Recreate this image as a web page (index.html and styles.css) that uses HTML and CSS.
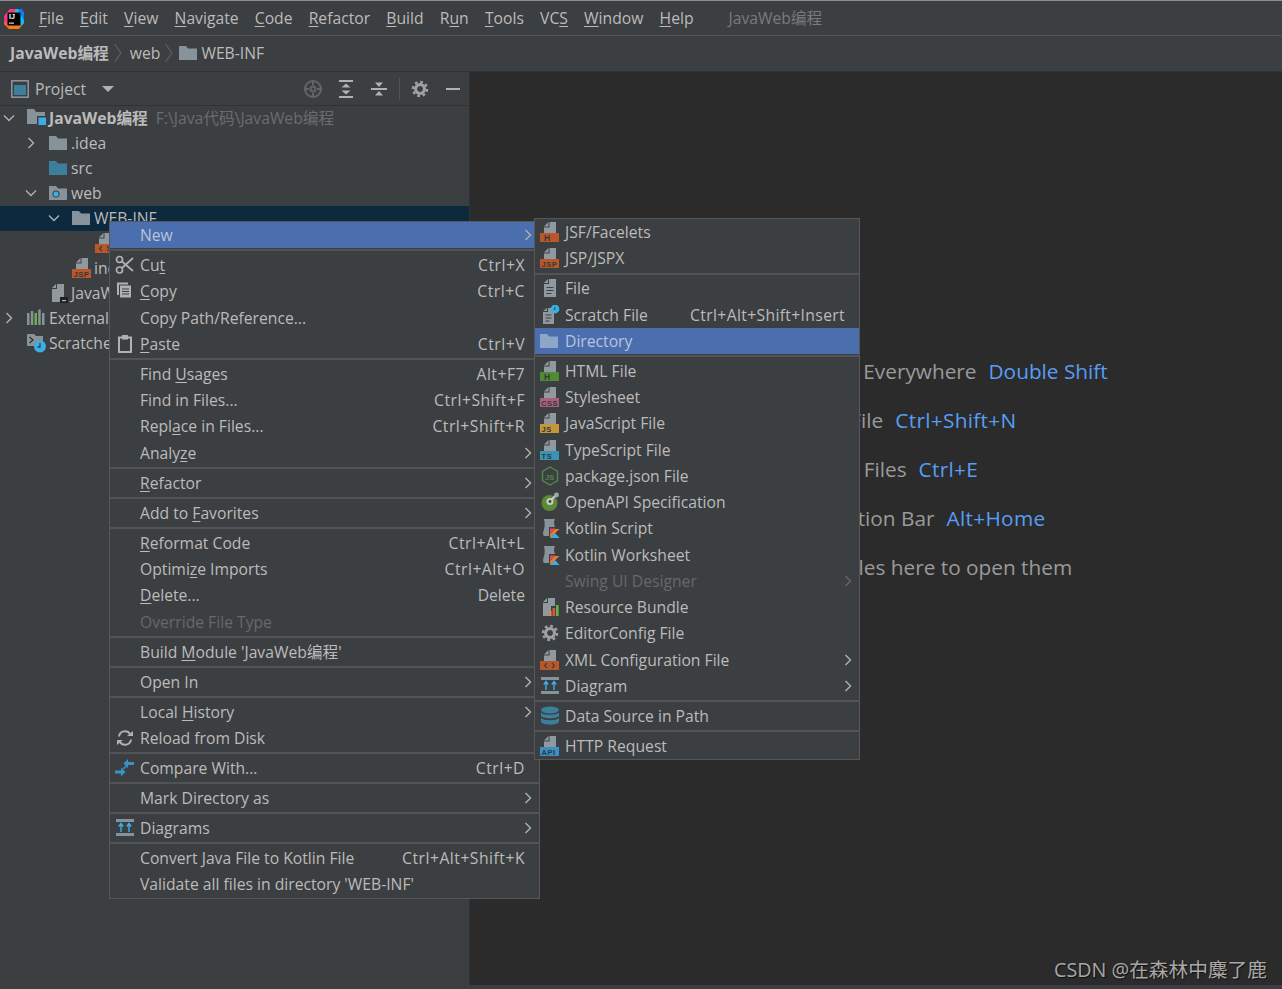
FILE: index.html
```html
<!DOCTYPE html>
<html lang="en">
<head>
<meta charset="utf-8">
<title>JavaWeb编程</title>
<link rel="stylesheet" href="styles.css">
</head>
<body>
<svg class="defs" aria-hidden="true">
  <symbol id="doc" viewBox="0 0 20 20"><path d="M9.5 0H16V11H4V5.5H9.5z" fill="#8f999f"/><path d="M4 4.5L8.5 0V4.5z" fill="#8f999f"/></symbol>
  <symbol id="i-jsf" viewBox="0 0 20 20"><use href="#doc"/><rect y="11" width="19" height="9" fill="#b9562a"/><text x="4" y="19" class="bt">H</text></symbol>
  <symbol id="i-jsp" viewBox="0 0 20 20"><use href="#doc"/><rect y="11" width="19" height="9" fill="#b9562a"/><text x="1.5" y="18.8" class="bs">JSP</text></symbol>
  <symbol id="i-html" viewBox="0 0 20 20"><use href="#doc"/><rect y="11" width="19" height="9" fill="#4f8a36"/><text x="4" y="19" class="bt">H</text></symbol>
  <symbol id="i-css" viewBox="0 0 20 20"><use href="#doc"/><rect y="11" width="19" height="9" fill="#a9607a"/><text x="1" y="18.8" class="bs">CSS</text></symbol>
  <symbol id="i-js" viewBox="0 0 20 20"><use href="#doc"/><rect y="11" width="19" height="9" fill="#c4953a"/><text x="1.5" y="18.8" class="bs">JS</text></symbol>
  <symbol id="i-ts" viewBox="0 0 20 20"><use href="#doc"/><rect y="11" width="19" height="9" fill="#3a92b5"/><text x="1.5" y="18.8" class="bs">TS</text></symbol>
  <symbol id="i-api" viewBox="0 0 20 20"><use href="#doc"/><rect y="11" width="19" height="9" fill="#3a8fc4"/><text x="1.5" y="18.8" class="bs">API</text></symbol>
  <symbol id="i-xml" viewBox="0 0 20 20"><use href="#doc"/><rect y="11" width="19" height="9" fill="#b9562a"/><path d="M7 13l-2.5 2.5L7 18M12 13l2.5 2.5L12 18" fill="none" stroke="#3c3f41" stroke-width="1.2"/></symbol>
  <symbol id="i-file" viewBox="0 0 20 20"><path d="M9 1H16V19H4V6H9z" fill="#8f999f"/><path d="M4 5L8 1V5z" fill="#8f999f"/><path d="M6.5 9.5h7M6.5 12.5h7M6.5 15.5h5" stroke="#3c3f41" stroke-width="1.2"/></symbol>
  <symbol id="i-scratch" viewBox="0 0 20 20"><path d="M8 3H14V19H3V7H8z" fill="#8f999f"/><path d="M3 6L7 3V6z" fill="#8f999f"/><path d="M5.5 10h6M5.5 13h6M5.5 16h4" stroke="#3c3f41" stroke-width="1.2"/><circle cx="15" cy="4" r="4.4" fill="#3baee6"/><path d="M15 1.8V4.4H13.5" fill="none" stroke="#24475c" stroke-width="1"/></symbol>
  <symbol id="i-dir" viewBox="0 0 20 20"><path d="M0 3H7L9 5.5H18V17H0z" fill="#8ea6c8"/></symbol>
  <symbol id="folder" viewBox="0 0 20 20"><path d="M0 3H7L9 5.5H18V17H0z" fill="#87939a"/></symbol>
  <symbol id="folder-src" viewBox="0 0 20 20"><path d="M0 3H7L9 5.5H18V17H0z" fill="#3d7e9c"/></symbol>
  <symbol id="folder-web" viewBox="0 0 20 20"><path d="M0 3H7L9 5.5H18V17H0z" fill="#87939a"/><circle cx="7" cy="11" r="3.6" fill="#3c3f41"/><circle cx="7" cy="11" r="2.6" fill="#3baee6"/></symbol>
  <symbol id="folder-root" viewBox="0 0 20 20"><path d="M0 1H7L9 4H18V16H0z" fill="#87939a"/><rect x="10" y="8" width="9" height="9" fill="#3c3f41"/><rect x="11.5" y="9.5" width="7.5" height="7.5" fill="#3baee6"/></symbol>
  <symbol id="i-iml" viewBox="0 0 20 20"><path d="M8 1H15V14H13V19H3V6H8z" fill="#8f999f"/><path d="M3 5L7 1V5z" fill="#8f999f"/><rect x="11" y="14" width="8" height="6" fill="#1f2021"/><rect x="13" y="17" width="4" height="1.2" fill="#bbb"/></symbol>
  <symbol id="i-lib" viewBox="1 0 20 20"><rect x="1" y="5" width="2.5" height="12" fill="#87939a"/><rect x="4.8" y="3" width="2.5" height="14" fill="#87939a"/><rect x="8.5" y="5" width="2.5" height="12" fill="#62b543"/><rect x="12.2" y="1.5" width="2.5" height="15.5" fill="#87939a"/><rect x="16" y="5" width="2.5" height="12" fill="#87939a"/></symbol>
  <symbol id="i-scr" viewBox="0 0 20 20"><path d="M0 1H7L9 3H16V13H0z" fill="#87939a"/><path d="M2.5 4L6 7L2.5 10" fill="none" stroke="#2b2d2e" stroke-width="1.2"/><circle cx="13" cy="13.5" r="6" fill="#3baee6"/><path d="M13 10V14H10.5" fill="none" stroke="#24475c" stroke-width="1.3"/></symbol>
  <symbol id="i-cut" viewBox="0 0 20 20"><g fill="none" stroke="#afb1b3" stroke-width="1.7"><circle cx="4.5" cy="4.5" r="3"/><circle cx="4.5" cy="15" r="3"/><path d="M7 6.5L18 16M7 13L18 3"/></g></symbol>
  <symbol id="i-copy" viewBox="0 0 20 20"><path d="M2 1.5H13V3.5H4V14H2z" fill="#afb1b3"/><rect x="5" y="4.5" width="11" height="12" fill="#afb1b3"/><path d="M7 8h7M7 10.5h7M7 13h7" stroke="#3c3f41" stroke-width="1.2"/></symbol>
  <symbol id="i-paste" viewBox="0 0 20 20"><path d="M4 3.5H16V18H4z" fill="none" stroke="#afb1b3" stroke-width="2"/><rect x="7" y="1" width="6" height="4.5" fill="#afb1b3"/></symbol>
  <symbol id="i-reload" viewBox="0 0 20 20"><path d="M4 8.5A6 6 0 0 1 15 6M16 11.5A6 6 0 0 1 5 14" fill="none" stroke="#afb1b3" stroke-width="2"/><path d="M12 8H18V3zM8 12H2V17z" fill="#afb1b3"/></symbol>
  <symbol id="i-compare" viewBox="0 0 20 20"><path d="M0 12.5H6V9.5L10.5 14L6 18.5V15.5H0z" fill="#3a92c8"/><path d="M19 4H13V1L8.5 5.5L13 10V7H19z" fill="#3a92c8"/><path d="M8 11L12 7.5" stroke="#3a92c8" stroke-width="1.6"/></symbol>
  <symbol id="i-diagram" viewBox="0 0 20 20"><rect x="1" y="1" width="18" height="3" fill="#87939a"/><rect x="1" y="15" width="18" height="3" fill="#87939a"/><path d="M6 14V6M14 14V6M3.8 8.5L6 5.5L8.2 8.5M11.8 8.5L14 5.5L16.2 8.5" fill="none" stroke="#3baee6" stroke-width="1.4"/></symbol>
  <symbol id="i-pkg" viewBox="0 0 20 20"><path d="M10 1L17.5 5.3V14.7L10 19L2.5 14.7V5.3z" fill="none" stroke="#4f8a4a" stroke-width="1.4"/><text x="5" y="13.5" class="bp">JS</text></symbol>
  <symbol id="i-oapi" viewBox="0 0 20 20"><circle cx="9.5" cy="11" r="8" fill="#5a8a32"/><circle cx="10" cy="9.5" r="3.6" fill="#c7c9ca"/><path d="M10 9.5L16 3" stroke="#c7c9ca" stroke-width="2"/><circle cx="16.5" cy="3" r="2.4" fill="#a3a5a6"/><circle cx="10" cy="9.5" r="1.4" fill="#3c3f41"/></symbol>
  <symbol id="i-kt" viewBox="0 0 20 20"><path d="M4 1H15C13.5 4 14 6 15 9H9V18H5C3 18 2.5 16 3.5 13C5 9 5 5 4 1z" fill="#87939a"/><path d="M10 20V10.5H15.5L10 15.5z" fill="#e44857"/><path d="M10 20L15 15L19.5 20z" fill="#3baee6"/><path d="M10 20V16L15 11H19.5z" fill="#e8833a" opacity=".95"/></symbol>
  <symbol id="i-res" viewBox="0 0 20 20"><path d="M8 1H15V9H11V19H3V6H8z" fill="#8f999f"/><path d="M3 5L7 1V5z" fill="#8f999f"/><rect x="9" y="14" width="2.6" height="5" fill="#e8833a"/><rect x="12.5" y="11" width="2.6" height="8" fill="#d9534f"/><rect x="16" y="8" width="2.6" height="11" fill="#62b543"/></symbol>
  <symbol id="i-gear" viewBox="1 1 18 18"><circle cx="10" cy="10" r="4" fill="none" stroke="#9fa2a5" stroke-width="2.8"/><circle cx="10" cy="10" r="6.3" fill="none" stroke="#9fa2a5" stroke-width="2.2" stroke-dasharray="2.47 2.47"/></symbol>
  <symbol id="i-db" viewBox="0 0 20 20"><ellipse cx="10" cy="4" rx="9" ry="3.4" fill="#3d7e9c"/><path d="M1 6.5C3 9.5 17 9.5 19 6.5V10C17 13 3 13 1 10z" fill="#3d7e9c"/><path d="M1 12C3 15 17 15 19 12V16C17 19.5 3 19.5 1 16z" fill="#3d7e9c"/></symbol>
  <symbol id="chev-r" viewBox="0 0 12 12"><path d="M3.5 1L8.5 6L3.5 11" fill="none" stroke="#afb1b3" stroke-width="1.4"/></symbol>
  <symbol id="chev-d" viewBox="0 0 12 12"><path d="M1 3.5L6 8.5L11 3.5" fill="none" stroke="#afb1b3" stroke-width="1.4"/></symbol>
</svg>

<header class="menubar">
  <svg class="logo" viewBox="0 0 20 20"><path d="M1 6L6 0H14L20 4V14L15 20H5L0 15z" fill="#f97a12"/><path d="M10 0H17L20 4V14L16 17L12 4z" fill="#07c3f2"/><path d="M0 7L7 0H12L4 14L2 16z" fill="#fc318c"/><path d="M14 0H18L20 5V12z" fill="#087cfa"/><rect x="3.5" y="3.5" width="13" height="13" fill="#000"/><text x="5" y="10.4" class="logo-t">IJ</text><rect x="5" y="13.6" width="5" height="1" fill="#fff"/></svg>
  <nav class="menus">
    <span><u>F</u>ile</span><span><u>E</u>dit</span><span><u>V</u>iew</span><span><u>N</u>avigate</span><span><u>C</u>ode</span><span><u>R</u>efactor</span><span><u>B</u>uild</span><span>R<u>u</u>n</span><span><u>T</u>ools</span><span>VC<u>S</u></span><span><u>W</u>indow</span><span><u>H</u>elp</span>
  </nav>
  <span class="title">JavaWeb编程</span>
</header>

<div class="navbar">
  <b>JavaWeb编程</b>
  <svg class="crumb" viewBox="0 0 10 20"><path d="M1.5 1L8 10L1.5 19" fill="none" stroke="#5f6365" stroke-width="1.1"/></svg>
  <span>web</span>
  <svg class="crumb" viewBox="0 0 10 20"><path d="M1.5 1L8 10L1.5 19" fill="none" stroke="#5f6365" stroke-width="1.1"/></svg>
  <svg class="ico"><use href="#folder"/></svg>
  <span>WEB-INF</span>
</div>

<main class="workspace">
  <aside class="sidebar">
    <div class="toolbar">
      <svg class="proj" viewBox="0 0 18 18"><rect x=".8" y=".8" width="16.4" height="16.4" fill="none" stroke="#87939a" stroke-width="1.6"/><rect x="3" y="5" width="12" height="10" fill="#3d7e9c"/></svg>
      <span class="proj-name">Project</span>
      <svg class="drop" viewBox="0 0 12 8"><path d="M0 1H12L6 7z" fill="#afb1b3"/></svg>
      <div class="tools">
        <svg class="tool" viewBox="0 0 20 20"><g fill="none" stroke="#626567" stroke-width="2"><circle cx="10" cy="10" r="8"/><circle cx="10" cy="10" r="2.5"/><path d="M10 2V6M10 14V18M2 10H6M14 10H18"/></g></svg>
        <svg class="tool" viewBox="0 0 20 20"><path d="M3 2H17M3 18H17" stroke="#afb1b3" stroke-width="2"/><path d="M10 4.5L14.5 8.5H5.5zM10 15.5L14.5 11.5H5.5z" fill="#afb1b3"/></svg>
        <svg class="tool" viewBox="0 0 20 20"><path d="M2 10H18" stroke="#afb1b3" stroke-width="2"/><path d="M10 8L14 3.5H6zM10 12L14 16.5H6z" fill="#afb1b3"/></svg>
        <i class="tool-sep"></i>
        <svg class="tool"><use href="#i-gear"/></svg>
        <svg class="tool" viewBox="0 0 20 20"><path d="M3 10H17" stroke="#afb1b3" stroke-width="2"/></svg>
      </div>
    </div>
    <ul class="tree">
      <li class="node d0"><svg class="chev"><use href="#chev-d"/></svg><svg class="ico"><use href="#folder-root"/></svg><b>JavaWeb编程</b><span class="path">F:\Java代码\JavaWeb编程</span></li>
      <li class="node d1"><svg class="chev"><use href="#chev-r"/></svg><svg class="ico"><use href="#folder"/></svg>.idea</li>
      <li class="node d1"><i class="chev"></i><svg class="ico"><use href="#folder-src"/></svg>src</li>
      <li class="node d1"><svg class="chev"><use href="#chev-d"/></svg><svg class="ico"><use href="#folder-web"/></svg>web</li>
      <li class="node d2 selected"><svg class="chev"><use href="#chev-d"/></svg><svg class="ico"><use href="#folder"/></svg>WEB-INF</li>
      <li class="node d3"><i class="chev"></i><svg class="ico"><use href="#i-xml"/></svg>web.xml</li>
      <li class="node d2"><i class="chev"></i><svg class="ico"><use href="#i-jsp"/></svg>index.jsp</li>
      <li class="node d1"><i class="chev"></i><svg class="ico"><use href="#i-iml"/></svg>JavaWeb.iml</li>
      <li class="node d0"><svg class="chev"><use href="#chev-r"/></svg><svg class="ico"><use href="#i-lib"/></svg>External Libraries</li>
      <li class="node d0"><i class="chev"></i><svg class="ico"><use href="#i-scr"/></svg>Scratches and Consoles</li>
    </ul>
  </aside>
  <section class="editor">
    <p>Search Everywhere<em>Double Shift</em></p>
    <p>Go to File<em class="keys">Ctrl+Shift+N</em></p>
    <p>Recent Files<em class="keys">Ctrl+E</em></p>
    <p>Navigation Bar<em class="keys">Alt+Home</em></p>
    <p>Drop files here to open them</p>
  </section>
</main>
<div class="statusline"></div>

<div class="popup main-menu">
  <div class="row active"><i class="ico"></i><span>New</span><svg class="arrow"><use href="#chev-r"/></svg></div>
  <hr>
  <div class="row"><svg class="ico"><use href="#i-cut"/></svg><span>Cu<u>t</u></span><kbd>Ctrl+X</kbd></div>
  <div class="row"><svg class="ico"><use href="#i-copy"/></svg><span><u>C</u>opy</span><kbd>Ctrl+C</kbd></div>
  <div class="row"><i class="ico"></i><span>Copy Path/Reference...</span></div>
  <div class="row"><svg class="ico"><use href="#i-paste"/></svg><span><u>P</u>aste</span><kbd>Ctrl+V</kbd></div>
  <hr>
  <div class="row"><i class="ico"></i><span>Find <u>U</u>sages</span><kbd>Alt+F7</kbd></div>
  <div class="row"><i class="ico"></i><span>Find in Files...</span><kbd>Ctrl+Shift+F</kbd></div>
  <div class="row"><i class="ico"></i><span>Repl<u>a</u>ce in Files...</span><kbd>Ctrl+Shift+R</kbd></div>
  <div class="row"><i class="ico"></i><span>Analy<u>z</u>e</span><svg class="arrow"><use href="#chev-r"/></svg></div>
  <hr>
  <div class="row"><i class="ico"></i><span><u>R</u>efactor</span><svg class="arrow"><use href="#chev-r"/></svg></div>
  <hr>
  <div class="row"><i class="ico"></i><span>Add to <u>F</u>avorites</span><svg class="arrow"><use href="#chev-r"/></svg></div>
  <hr>
  <div class="row"><i class="ico"></i><span><u>R</u>eformat Code</span><kbd>Ctrl+Alt+L</kbd></div>
  <div class="row"><i class="ico"></i><span>Optimi<u>z</u>e Imports</span><kbd>Ctrl+Alt+O</kbd></div>
  <div class="row"><i class="ico"></i><span><u>D</u>elete...</span><kbd class="word">Delete</kbd></div>
  <div class="row off"><i class="ico"></i><span>Override File Type</span></div>
  <hr>
  <div class="row"><i class="ico"></i><span>Build <u>M</u>odule 'JavaWeb编程'</span></div>
  <hr>
  <div class="row"><i class="ico"></i><span>Open In</span><svg class="arrow"><use href="#chev-r"/></svg></div>
  <hr>
  <div class="row"><i class="ico"></i><span>Local <u>H</u>istory</span><svg class="arrow"><use href="#chev-r"/></svg></div>
  <div class="row"><svg class="ico"><use href="#i-reload"/></svg><span>Reload from Disk</span></div>
  <hr>
  <div class="row"><svg class="ico"><use href="#i-compare"/></svg><span>Compare With...</span><kbd>Ctrl+D</kbd></div>
  <hr>
  <div class="row"><i class="ico"></i><span>Mark Directory as</span><svg class="arrow"><use href="#chev-r"/></svg></div>
  <hr>
  <div class="row"><svg class="ico"><use href="#i-diagram"/></svg><span>Diagrams</span><svg class="arrow"><use href="#chev-r"/></svg></div>
  <hr>
  <div class="row"><i class="ico"></i><span>Convert Java File to Kotlin File</span><kbd>Ctrl+Alt+Shift+K</kbd></div>
  <div class="row"><i class="ico"></i><span>Validate all files in directory 'WEB-INF'</span></div>
</div>

<div class="popup sub-menu">
  <div class="row"><svg class="ico"><use href="#i-jsf"/></svg><span>JSF/Facelets</span></div>
  <div class="row"><svg class="ico"><use href="#i-jsp"/></svg><span>JSP/JSPX</span></div>
  <hr>
  <div class="row"><svg class="ico"><use href="#i-file"/></svg><span>File</span></div>
  <div class="row"><svg class="ico"><use href="#i-scratch"/></svg><span>Scratch File</span><kbd>Ctrl+Alt+Shift+Insert</kbd></div>
  <div class="row active"><svg class="ico"><use href="#i-dir"/></svg><span>Directory</span></div>
  <hr>
  <div class="row"><svg class="ico"><use href="#i-html"/></svg><span>HTML File</span></div>
  <div class="row"><svg class="ico"><use href="#i-css"/></svg><span>Stylesheet</span></div>
  <div class="row"><svg class="ico"><use href="#i-js"/></svg><span>JavaScript File</span></div>
  <div class="row"><svg class="ico"><use href="#i-ts"/></svg><span>TypeScript File</span></div>
  <div class="row"><svg class="ico"><use href="#i-pkg"/></svg><span>package.json File</span></div>
  <div class="row"><svg class="ico"><use href="#i-oapi"/></svg><span>OpenAPI Specification</span></div>
  <div class="row"><svg class="ico"><use href="#i-kt"/></svg><span>Kotlin Script</span></div>
  <div class="row"><svg class="ico"><use href="#i-kt"/></svg><span>Kotlin Worksheet</span></div>
  <div class="row off"><i class="ico"></i><span>Swing UI Designer</span><svg class="arrow dim"><use href="#chev-r"/></svg></div>
  <div class="row"><svg class="ico"><use href="#i-res"/></svg><span>Resource Bundle</span></div>
  <div class="row"><svg class="ico"><use href="#i-gear"/></svg><span>EditorConfig File</span></div>
  <div class="row"><svg class="ico"><use href="#i-xml"/></svg><span>XML Configuration File</span><svg class="arrow"><use href="#chev-r"/></svg></div>
  <div class="row"><svg class="ico"><use href="#i-diagram"/></svg><span>Diagram</span><svg class="arrow"><use href="#chev-r"/></svg></div>
  <hr>
  <div class="row"><svg class="ico"><use href="#i-db"/></svg><span>Data Source in Path</span></div>
  <hr>
  <div class="row"><svg class="ico"><use href="#i-api"/></svg><span>HTTP Request</span></div>
</div>

<div class="watermark">CSDN @在森林中麋了鹿</div>
</body>
</html>
```
FILE: styles.css
```css
* { box-sizing: border-box; }
html, body { margin: 0; height: 100%; }
body {
  position: relative;
  height: 989px;
  overflow: hidden;
  background: #3c3f41;
  color: #bbbbbb;
  font: 15.7px/20px "Open Sans", "Noto Sans CJK SC", sans-serif;
  display: flex;
  flex-direction: column;
}
.defs { position: absolute; width: 0; height: 0; }
.bt, .bs, .bp, .logo-t { font-family: "Liberation Sans", sans-serif; font-weight: 700; }
.bt { font-size: 8.5px; fill: #35383a; }
.bs { font-size: 7.6px; fill: #35383a; letter-spacing: .5px; }
.bp { font-size: 7.5px; fill: #4f8a4a; }
.logo-t { font-size: 7px; fill: #fff; }
u { text-underline-offset: 2px; text-decoration-thickness: 1px; }
.ico { flex: none; width: 20px; height: 20px; display: block; }

.menubar {
  flex: none;
  height: 36px;
  display: flex;
  align-items: center;
  padding: 0 0 1px 4px;
  border-top: 1px solid #8b8d8f;
  border-bottom: 1px solid #515354;
}
.logo { width: 20px; height: 20px; flex: none; margin-top: 2px; }
.menus { display: flex; gap: 16.2px; margin-left: 15px; }
.title { margin-left: 35px; color: #787a7c; }

.navbar {
  flex: none;
  height: 36px;
  display: flex;
  align-items: center;
  padding: 0 0 2px 10px;
  border-bottom: 1px solid #323232;
}
.navbar b { font-weight: 700; }
.crumb { width: 10px; height: 20px; margin: 0 7px 0 4px; flex: none; }
.navbar .ico { margin-left: -2px; margin-right: 2px; }

.workspace { flex: 1; display: flex; min-height: 0; }
.sidebar { width: 470px; flex: none; border-right: 1px solid #323232; }
.toolbar {
  height: 34px;
  display: flex;
  align-items: center;
  padding-left: 11px;
  border-bottom: 1px solid #323232;
}
.proj { width: 18px; height: 18px; }
.proj-name { margin-left: 6px; }
.drop { width: 12px; height: 8px; margin-left: 16px; }
.tools { margin-left: auto; display: flex; align-items: center; gap: 13px; padding-right: 6px; }
.tool { width: 20px; height: 20px; display: block; }
.tool-sep { width: 1px; height: 22px; background: #515354; margin: 0 -3px; }

.tree { list-style: none; margin: 0; padding: 0; }
.node { height: 25px; display: flex; align-items: center; white-space: nowrap; padding-bottom: 2px; }
.node b { font-weight: 700; }
.d0 { padding-left: 3px; }
.d1 { padding-left: 25px; }
.d2 { padding-left: 48px; }
.d3 { padding-left: 71px; }
.selected { background: #0d293e; }
.chev { width: 12px; height: 12px; flex: none; display: block; margin-right: 12px; }
.node .ico { margin-right: 2px; }
.path { margin-left: 8px; color: #6a6c6e; }

.editor {
  flex: 1;
  background: #2b2b2b;
  padding: 284px 0 0 322px;
  font-size: 20.8px;
  line-height: 30px;
  color: #9a9a9a;
}
.editor p { margin: 0 0 18.9px; }
.editor em { font-style: normal; color: #589df6; margin-left: 12px; }
.editor .keys { letter-spacing: .3px; }
.statusline { flex: none; height: 4px; background: #3c3f41; }

.popup {
  position: absolute;
  background: #3c3f41;
  border: 1px solid #555759;
  white-space: nowrap;
}
.main-menu { left: 109px; top: 221px; width: 431px; }
.sub-menu { left: 534px; top: 218px; width: 326px; }
.row {
  height: 26.25px;
  display: flex;
  align-items: center;
  gap: 5px;
  padding: 0 14px 0 5px;
}
.row.active { background: #4b6eaf; color: #b9c4d8; }
.row.off { color: #666869; }
.row kbd { margin-left: auto; font: inherit; letter-spacing: .5px; }
.row kbd.word { letter-spacing: 0; }
.sub-menu .row kbd { letter-spacing: .35px; }
.arrow { margin-left: auto; margin-right: -9px; width: 12px; height: 12px; flex: none; }
.arrow.dim { opacity: .35; }
.popup hr {
  height: 3.8px;
  margin: 0;
  border: 0;
  background: linear-gradient(#3c3f41 1.4px, #515354 1.4px, #515354 2.6px, #3c3f41 2.6px);
}
.watermark {
  position: absolute;
  right: 15px;
  top: 957px;
  font-size: 19.7px;
  line-height: 26px;
  color: #a8a8a8;
  text-shadow: 1px 1px 1px #111;
}
```
